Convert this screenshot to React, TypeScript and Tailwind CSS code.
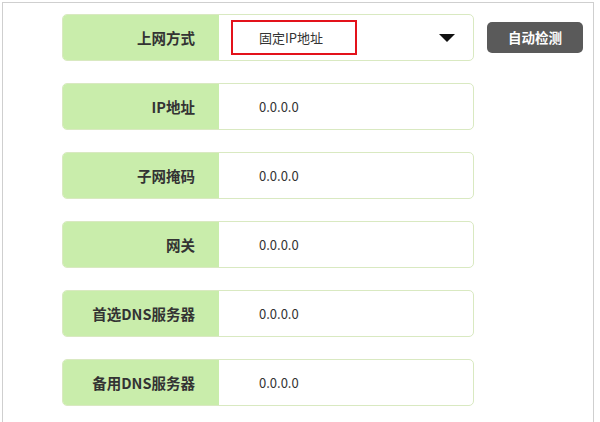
const rows = [
  { label: "IP地址", value: "0.0.0.0" },
  { label: "子网掩码", value: "0.0.0.0" },
  { label: "网关", value: "0.0.0.0" },
  { label: "首选DNS服务器", value: "0.0.0.0" },
  { label: "备用DNS服务器", value: "0.0.0.0" },
];

const font = "font-['Microsoft_YaHei','Noto_Sans_CJK_SC',sans-serif]";

function Field({ label, children }: { label: string; children: React.ReactNode }) {
  return (
    <div className="flex h-[47px] w-[412px] overflow-hidden rounded-[5px] border border-[#d9e9c1] bg-white">
      <div className="flex w-[156px] shrink-0 items-center justify-end bg-[#c9edab] pr-[24px] text-[14.5px] font-bold text-[#333]">
        {label}
      </div>
      <div className="flex flex-1 items-center">{children}</div>
    </div>
  );
}

export default function App() {
  return (
    <div className={`h-[422px] w-[600px] overflow-hidden bg-white ${font}`}>
      <div className="ml-[2px] mt-[2px] h-[440px] w-[592px] border-l border-r border-t border-[#cfcfcf] pl-[59px] pt-[11px]">
        <div className="flex flex-col gap-[22px]">
          <div className="flex items-center">
            <Field label="上网方式">
              <div className="ml-[12px] flex h-[35px] w-[126px] items-center border-2 border-[#e3121b] pl-[26px] text-[13px] text-[#333]">
                固定IP地址
              </div>
              <svg className="ml-auto mr-[18px]" width="16" height="8" viewBox="0 0 16 8">
                <path d="M0 0H16L8 8Z" fill="#111" />
              </svg>
            </Field>
            <button className="ml-[13px] flex h-[31px] w-[96px] items-center justify-center rounded-[5px] bg-[#5a5a5a] text-[13.5px] font-bold text-white">
              自动检测
            </button>
          </div>
          {rows.map((r) => (
            <Field key={r.label} label={r.label}>
              <span className="pl-[40px] text-[13px] text-[#333]">{r.value}</span>
            </Field>
          ))}
        </div>
      </div>
    </div>
  );
}
